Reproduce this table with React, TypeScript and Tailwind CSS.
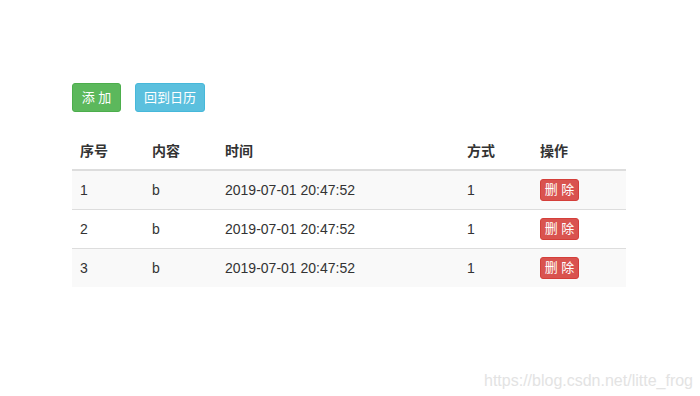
import React from 'react';

const rows = [
  { id: 1, content: 'b', time: '2019-07-01 20:47:52', mode: '1' },
  { id: 2, content: 'b', time: '2019-07-01 20:47:52', mode: '1' },
  { id: 3, content: 'b', time: '2019-07-01 20:47:52', mode: '1' },
];

export default function App() {
  return (
    <div
      className="relative w-[700px] h-[396px] bg-white text-[#333] overflow-hidden"
      style={{ fontFamily: '"Liberation Sans", "Noto Sans CJK SC", sans-serif' }}
    >
      <div className="pl-[72px] pt-[83px]">
        <div className="flex gap-[14px]">
          <button className="h-[29px] w-[49px] rounded-[3px] border border-[#4cae4c] bg-[#5cb85c] text-white text-[13px] leading-none">
            添 加
          </button>
          <button className="h-[29px] w-[70px] rounded-[3px] border border-[#46b8da] bg-[#5bc0de] text-white text-[13px] leading-none">
            回到日历
          </button>
        </div>

        <table className="mt-[21px] w-[554px] border-collapse text-[14px] leading-5">
          <thead>
            <tr className="border-b-2 border-[#ddd]">
              <th className="w-[72px] p-2 text-left font-bold">序号</th>
              <th className="w-[73px] p-2 text-left font-bold">内容</th>
              <th className="w-[242px] p-2 text-left font-bold">时间</th>
              <th className="w-[73px] p-2 text-left font-bold">方式</th>
              <th className="p-2 text-left font-bold">操作</th>
            </tr>
          </thead>
          <tbody>
            {rows.map((r, i) => (
              <tr
                key={r.id}
                className={`${i > 0 ? 'border-t border-[#ddd]' : ''} ${i % 2 === 0 ? 'bg-[#f9f9f9]' : 'bg-white'}`}
              >
                <td className="h-[39px] px-2 py-0 align-middle">{r.id}</td>
                <td className="px-2 py-0 align-middle">{r.content}</td>
                <td className="px-2 py-0 align-middle">{r.time}</td>
                <td className="px-2 py-0 align-middle">{r.mode}</td>
                <td className="px-2 py-0 align-middle">
                  <button className="flex h-[22px] w-[39px] items-center justify-center rounded-[3px] border border-[#d43f3a] bg-[#d9534f] text-white text-[13px] leading-none">
                    删 除
                  </button>
                </td>
              </tr>
            ))}
          </tbody>
        </table>
      </div>

      <div className="absolute left-[484px] top-[369px] text-[16px] text-[#e3e3e3]">
        https://blog.csdn.net/litte_frog
      </div>
    </div>
  );
}
